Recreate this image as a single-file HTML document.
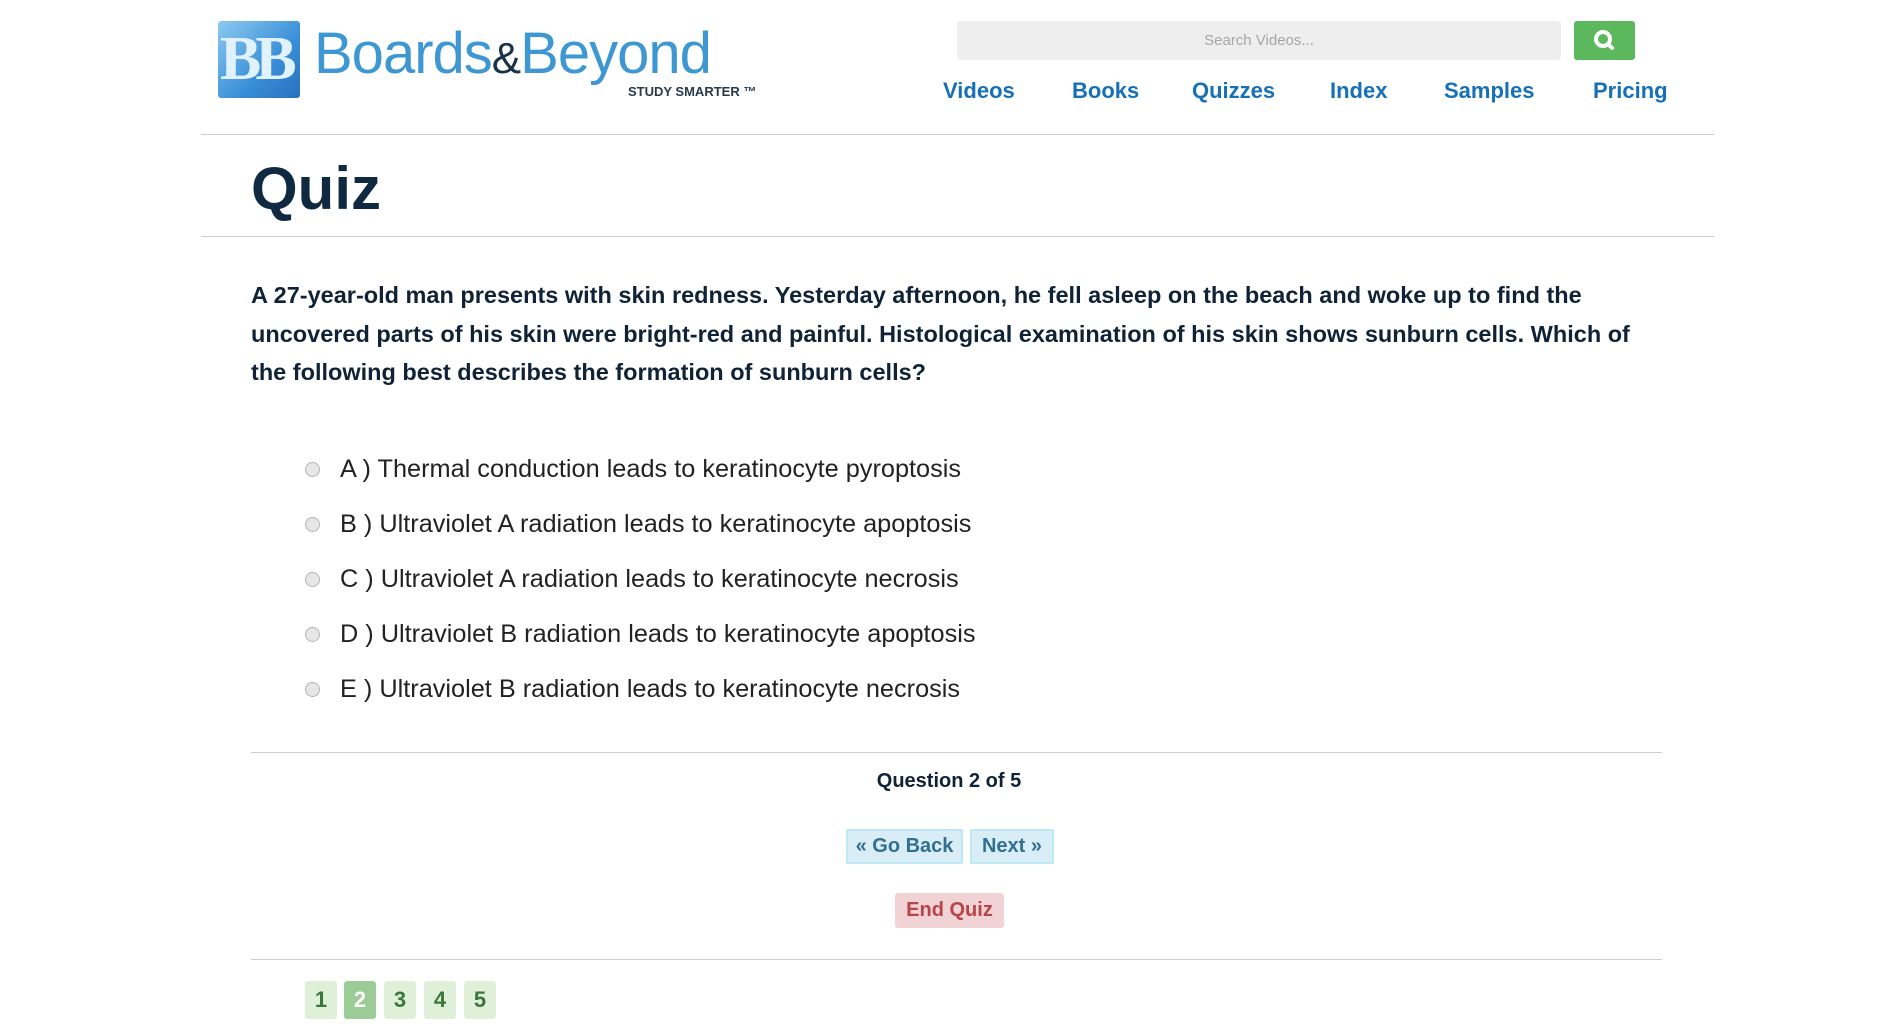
<!DOCTYPE html>
<html><head><meta charset="utf-8"><style>
body{margin:0;background:#fff;font-family:"Liberation Sans",sans-serif;width:1899px;height:1032px;overflow:hidden;position:relative}
.a{position:absolute}
.nav{position:absolute;top:78px;font-size:22px;font-weight:bold;color:#1670b8}
.opt{position:absolute;left:305px;font-size:25.3px;color:#222}
.opt i{position:absolute;left:0;top:7px;width:13px;height:13px;border-radius:50%;background:#e6e6e6;border:1px solid #b5b5b5}
.opt span{position:absolute;left:35px;white-space:nowrap}
.pg{position:absolute;top:981px;width:32px;height:38px;background:#dff0d8;color:#3c763d;font-weight:bold;font-size:22px;text-align:center;line-height:38px;border-radius:3px}
</style></head><body>
<div class="a" style="left:218px;top:21px;width:82px;height:77px;background:linear-gradient(135deg,#8ccaf0,#3a8fd8 60%,#2a6fc0);border-radius:3px"></div>
<div class="a" style="left:220px;top:24px;font-size:62px;font-weight:bold;color:#dff2fd;letter-spacing:-6px;font-family:'Liberation Serif',serif">BB</div>
<div class="a" style="left:314px;top:20px;font-size:58px;color:#3d97d3;letter-spacing:-1px;white-space:nowrap">Boards<span style="color:#1b3346;font-size:44px">&amp;</span>Beyond</div>
<div class="a" style="left:628px;top:84px;font-size:13px;font-weight:bold;color:#27394a">STUDY SMARTER ™</div>
<div class="a" style="left:957px;top:21px;width:604px;height:39px;background:#eeeeee;border-radius:4px;color:#a5a5a5;font-size:15px;text-align:center;line-height:39px">Search Videos...</div>
<div class="a" style="left:1574px;top:21px;width:61px;height:39px;background:#5cb85c;border-radius:3px">
<svg width="61" height="39"><circle cx="29" cy="18" r="7" fill="none" stroke="#fff" stroke-width="4"/><line x1="34" y1="23" x2="38" y2="27" stroke="#fff" stroke-width="4" stroke-linecap="round"/></svg></div>
<div class="nav" style="left:943px">Videos</div>
<div class="nav" style="left:1072px">Books</div>
<div class="nav" style="left:1192px">Quizzes</div>
<div class="nav" style="left:1330px">Index</div>
<div class="nav" style="left:1444px">Samples</div>
<div class="nav" style="left:1593px">Pricing</div>
<div class="a" style="left:201px;top:134px;width:1513px;height:1px;background:#ccc"></div>
<div class="a" style="left:251px;top:154px;font-size:60px;font-weight:bold;color:#0f2a40">Quiz</div>
<div class="a" style="left:201px;top:236px;width:1513px;height:1px;background:#ccc"></div>
<div class="a" style="left:251px;top:276px;width:1400px;font-size:23.5px;font-weight:bold;color:#0f2236;line-height:38.5px">A 27-year-old man presents with skin redness. Yesterday afternoon, he fell asleep on the beach and woke up to find the uncovered parts of his skin were bright-red and painful. Histological examination of his skin shows sunburn cells. Which of the following best describes the formation of sunburn cells?</div>
<div class="opt" style="top:455px"><i></i><span>A ) Thermal conduction leads to keratinocyte pyroptosis</span></div>
<div class="opt" style="top:510px"><i></i><span>B ) Ultraviolet A radiation leads to keratinocyte apoptosis</span></div>
<div class="opt" style="top:565px"><i></i><span>C ) Ultraviolet A radiation leads to keratinocyte necrosis</span></div>
<div class="opt" style="top:620px"><i></i><span>D ) Ultraviolet B radiation leads to keratinocyte apoptosis</span></div>
<div class="opt" style="top:675px"><i></i><span>E ) Ultraviolet B radiation leads to keratinocyte necrosis</span></div>
<div class="a" style="left:251px;top:752px;width:1411px;height:1px;background:#ccc"></div>
<div class="a" style="left:849px;top:770px;width:200px;text-align:center;font-size:20px;font-weight:bold;color:#0f2236">Question 2 of 5</div>
<div class="a" style="left:846px;top:829px;width:113px;height:31px;background:#d9edf7;border:2px solid #bce8f1;border-radius:2px;color:#31708f;font-weight:bold;font-size:20px;text-align:center;line-height:31px">« Go Back</div>
<div class="a" style="left:970px;top:829px;width:80px;height:31px;background:#d9edf7;border:2px solid #bce8f1;border-radius:2px;color:#31708f;font-weight:bold;font-size:20px;text-align:center;line-height:31px">Next »</div>
<div class="a" style="left:895px;top:893px;width:109px;height:35px;background:#f2d3d5;border-radius:3px;color:#b94448;font-weight:bold;font-size:20px;text-align:center;line-height:35px">End Quiz</div>
<div class="a" style="left:251px;top:959px;width:1411px;height:1px;background:#ccc"></div>
<div class="pg" style="left:305px">1</div>
<div class="pg" style="left:344px;background:#9ccc96;color:#fff">2</div>
<div class="pg" style="left:384px">3</div>
<div class="pg" style="left:424px">4</div>
<div class="pg" style="left:464px">5</div>
</body></html>
